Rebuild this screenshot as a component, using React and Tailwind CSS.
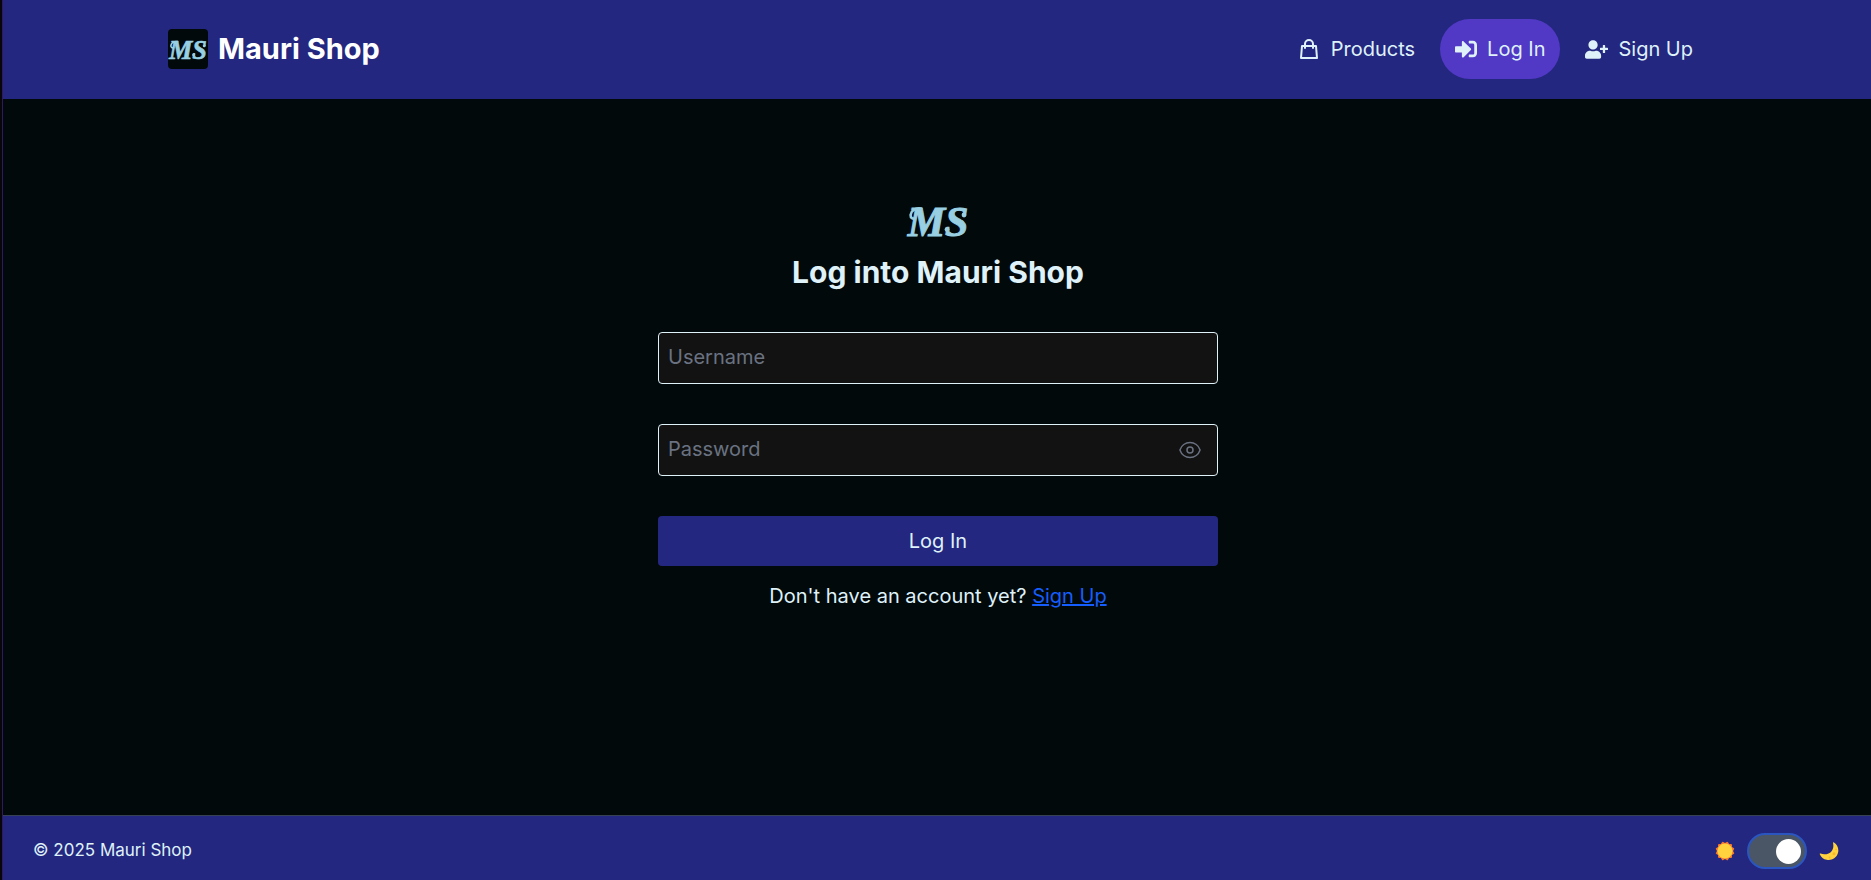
import { useState } from "react";
import { FaSignInAlt, FaUserPlus } from "react-icons/fa";
import { HiOutlineShoppingBag } from "react-icons/hi";
import { HiOutlineEye } from "react-icons/hi2";

function Monogram({ className }) {
  return (
    <svg viewBox="0 0 64 50" role="img" aria-label="Mauri Shop logo" className={className}>
      <text
        x="32"
        y="38"
        textAnchor="middle"
        className="fill-[#98cfe2] stroke-[#98cfe2] font-['Liberation_Serif',serif] text-[42px] font-bold italic"
        strokeWidth="1"
      >
        MS
      </text>
      <path
        d="M15 10.5C9 9.5 5 13 4.6 17C4.4 20 7 21.4 9 20"
        fill="none"
        stroke="#98cfe2"
        strokeWidth="2.6"
        strokeLinecap="round"
      />
      <circle cx="58" cy="17" r="2.4" fill="#98cfe2" />
      <circle cx="41" cy="31.5" r="2.4" fill="#98cfe2" />
    </svg>
  );
}

function NavItem({ href, icon: Icon, iconClass, active, children }) {
  return (
    <a
      href={href}
      className={
        active
          ? "flex h-15 items-center gap-2.5 rounded-full bg-[#5139c6] px-[15px]"
          : "flex h-15 items-center gap-2.5 rounded-full px-[15px]"
      }
    >
      <Icon className={iconClass} aria-hidden="true" />
      {children}
    </a>
  );
}

function Header() {
  return (
    <header className="bg-[#24277f] pt-[19px] pb-5 pl-0.5">
      <div className="mx-auto flex max-w-[1540px] items-center justify-between">
        <a href="#home" className="flex items-center gap-2.5">
          <span className="flex size-10 items-center justify-center rounded-sm bg-[#02090b] pt-1">
            <Monogram className="w-10" />
          </span>
          <span className="text-[29px] leading-10 font-bold text-white">Mauri Shop</span>
        </a>
        <nav className="flex items-center gap-2.5 text-xl">
          <NavItem href="#products" icon={HiOutlineShoppingBag} iconClass="size-6">
            Products
          </NavItem>
          <NavItem href="#login" icon={FaSignInAlt} iconClass="size-[22px]" active>
            Log In
          </NavItem>
          <NavItem href="#signup" icon={FaUserPlus} iconClass="size-[23px]">
            Sign Up
          </NavItem>
        </nav>
      </div>
    </header>
  );
}

const fieldClass =
  "h-13 w-full rounded-sm border border-[#dff1f9] bg-[#121212] px-[9px] pb-0.5 text-xl outline-none placeholder:text-[#6a7282]";

function LoginForm() {
  const [visible, setVisible] = useState(false);
  return (
    <form className="mx-auto w-full max-w-[560px]" onSubmit={(e) => e.preventDefault()}>
      <Monogram className="mx-auto w-16" />
      <h1 className="mt-1 text-center text-[30px] leading-10 font-bold">Log into Mauri Shop</h1>
      <div className="mt-10">
        <input aria-label="Username" placeholder="Username" className={fieldClass} />
      </div>
      <div className="relative mt-10">
        <input
          aria-label="Password"
          type={visible ? "text" : "password"}
          placeholder="Password"
          className={fieldClass}
        />
        <button
          type="button"
          aria-label="Show password"
          onClick={() => setVisible(!visible)}
          className="absolute inset-y-0 right-4 flex items-center text-[#6a7282]"
        >
          <HiOutlineEye className="size-6" />
        </button>
      </div>
      <button type="submit" className="mt-10 h-[50px] w-full rounded-sm bg-[#24277f] text-xl">
        Log In
      </button>
      <p className="mt-4 text-center text-xl">
        Don't have an account yet?{" "}
        <a href="#signup" className="text-[#155dfc] underline">
          Sign Up
        </a>
      </p>
    </form>
  );
}

function Sun() {
  return (
    <svg viewBox="0 0 20 20" className="size-5" aria-hidden="true">
      <g fill="#f8772f">
        <rect x="3" y="3" width="14" height="14" rx="1" />
        <rect x="3" y="3" width="14" height="14" rx="1" transform="rotate(30 10 10)" />
        <rect x="3" y="3" width="14" height="14" rx="1" transform="rotate(60 10 10)" />
      </g>
      <circle cx="10" cy="10" r="7.6" fill="#ffd23e" />
    </svg>
  );
}

function Moon() {
  return (
    <svg viewBox="0 0 20 20" className="size-5" aria-hidden="true">
      <path
        d="M14.6 1.2C18.6 3.5 20.3 8.3 18.8 12.6C17.2 17.2 12.4 19.8 7.7 18.8C4.5 18.2 2 16.1.8 13.2C.6 12.7 1 12.4 1.5 12.6C5 13.9 9.2 13.5 12 10.9C14.3 8.7 14.8 5.3 14 1.8C13.9 1.3 14.2 1 14.6 1.2Z"
        fill="#ffd23e"
      />
      <g fill="#f9b52f">
        <circle cx="15" cy="12.8" r="1.5" />
        <circle cx="10.5" cy="16.5" r="0.9" />
        <circle cx="17" cy="8.5" r="0.8" />
      </g>
    </svg>
  );
}

function Footer() {
  const [dark, setDark] = useState(true);
  return (
    <footer className="flex h-[65px] items-center justify-between border-t border-[#364153] bg-[#24277f] pt-1.5 pr-8 pl-[30px]">
      <p className="text-[17px]">© 2025 Mauri Shop</p>
      <div className="flex items-center gap-3">
        <Sun />
        <label className="relative block h-9 w-15 cursor-pointer rounded-full border-2 border-[#2b56c0] bg-[#4a5565]">
          <input
            type="checkbox"
            aria-label="Dark mode"
            checked={dark}
            onChange={() => setDark(!dark)}
            className="peer sr-only"
          />
          <span className="absolute top-1 left-1 size-[25px] rounded-full bg-white peer-checked:left-[27px]" />
        </label>
        <Moon />
      </div>
    </footer>
  );
}

export default function App() {
  return (
    <div className="flex min-h-screen flex-col border-l-2 border-[#08060b] bg-[#02090b] font-[Inter,sans-serif] text-[#dff1f9]">
      <div className="flex grow flex-col border-l border-[#2d1b5e]">
        <Header />
        <main className="grow pt-[99px] pr-4 pb-10 pl-[18px]">
          <LoginForm />
        </main>
        <Footer />
      </div>
    </div>
  );
}
